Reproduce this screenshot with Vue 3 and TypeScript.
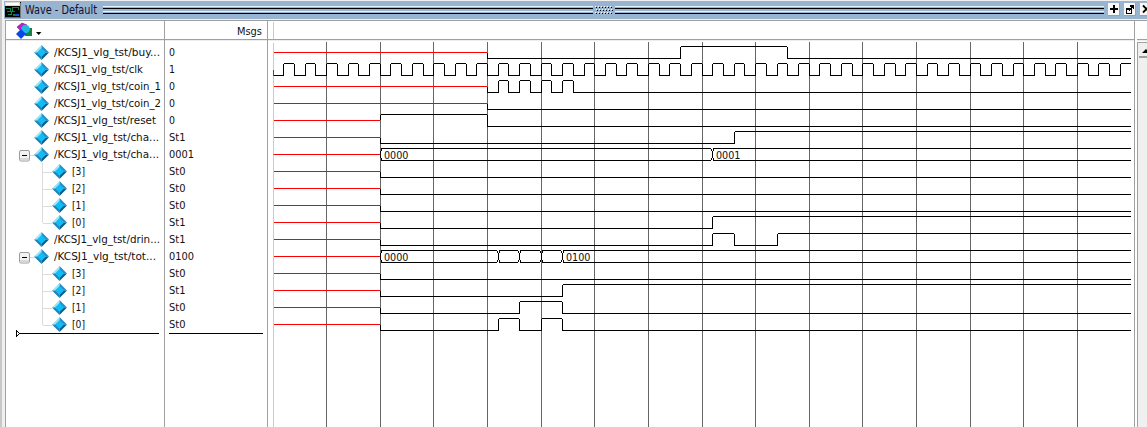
<script setup lang="ts">
interface Signal {
  name: string
  width: number
  value: string
  kind: 'bit' | 'bus'
  child?: boolean
  open?: boolean
  last?: boolean
  start: number
  level?: 0 | 1
  edges?: number[]
  labels?: { tick: number; text: string }[]
}

const bit = (name: string, width: number, value: string, start: number, level: 0 | 1, edges: number[]): Signal =>
  ({ name, width, value, kind: 'bit', start, level, edges })
const child = (name: string, value: string, edges: number[], last = false): Signal =>
  ({ name, width: 13, value, kind: 'bit', child: true, last, start: 10, level: 0, edges })

const clock = Array.from({ length: 79 }, (_, i) => i + 1)

const signals: Signal[] = [
  bit('/KCSJ1_vlg_tst/buy...', 106, '0', 20, 0, [38, 48]),
  bit('/KCSJ1_vlg_tst/clk', 89, '1', 0, 0, clock),
  bit('/KCSJ1_vlg_tst/coin_1', 107, '0', 20, 0, [21, 22, 23, 24, 25, 26, 27, 28]),
  bit('/KCSJ1_vlg_tst/coin_2', 107, '0', 20, 0, []),
  bit('/KCSJ1_vlg_tst/reset', 102, '0', 10, 1, [20]),
  bit('/KCSJ1_vlg_tst/cha...', 105, 'St1', 10, 0, [43]),
  { name: '/KCSJ1_vlg_tst/cha...', width: 105, value: '0001', kind: 'bus', open: true, start: 10, edges: [41], labels: [{ tick: 10, text: '0000' }, { tick: 41, text: '0001' }] },
  child('[3]', 'St0', []),
  child('[2]', 'St0', []),
  child('[1]', 'St0', []),
  child('[0]', 'St1', [41], true),
  bit('/KCSJ1_vlg_tst/drin...', 106, 'St1', 10, 0, [41, 43, 47]),
  { name: '/KCSJ1_vlg_tst/tot...', width: 102, value: '0100', kind: 'bus', open: true, start: 10, edges: [21, 23, 25, 27], labels: [{ tick: 10, text: '0000' }, { tick: 27, text: '0100' }] },
  child('[3]', 'St0', []),
  child('[2]', 'St1', [27]),
  child('[1]', 'St0', [23, 27]),
  child('[0]', 'St0', [21, 23, 25, 27], true),
]

// The wave canvas starts at the cursor; one tick is half a clock period.
const ORIGIN = 5
const END = 863
const tickX = (t: number): number => Math.floor(ORIGIN + t * 10.725)
const centre = (i: number): number => 12 + i * 17
const grid = Array.from({ length: 15 }, (_, i) => tickX((i + 1) * 5))

function trace(s: Signal, i: number): string {
  const c = centre(i)
  const hi = c - 6 + 0.5
  const lo = c + 6 + 0.5
  let x = tickX(s.start)
  const edges = s.edges ?? []
  if (s.kind === 'bus') {
    const stops = [x, ...edges.map(tickX)]
    let d = ''
    stops.forEach((p, n) => {
      const next = n + 1 < stops.length ? stops[n + 1] - 1 : END
      d += `M${p + 1} ${hi}H${next}M${p + 1} ${lo}H${next}`
      d += `M${p + 0.5} ${c - 3}V${c + 4}M${p + 1.5} ${c - 5}v2M${p + 1.5} ${c + 4}v2`
      if (n) d += `M${p - 0.5} ${c - 5}v2M${p - 0.5} ${c + 4}v2`
    })
    return d
  }
  let level = s.level ?? 0
  let d = ''
  if (s.start > 0) d += level ? `M${x + 0.5} ${c - 5}V${c}` : `M${x + 0.5} ${c + 1}V${c + 7}`
  for (const e of edges) {
    const nx = tickX(e)
    d += level ? `M${x + 1} ${hi}H${nx}` : `M${x} ${lo}H${nx + 1}`
    d += `M${nx + 0.5} ${c - 5}V${c + 7}`
    level = level ? 0 : 1
    x = nx
  }
  d += level ? `M${x + 1} ${hi}H${END}` : `M${x} ${lo}H${END}`
  return d
}
</script>

<template>
  <div class="window">
    <div class="edge"></div>
    <main class="dock">
      <header class="titlebar">
        <svg class="app-icon" width="16" height="16" viewBox="0 0 16 16" shape-rendering="crispEdges">
          <path d="M0 0H16V16H0z" fill="#000" />
          <path d="M0 0H15V4H0z" fill="#d8d8d8" />
          <path d="M1 1H14V3H1z" fill="#fff" />
          <path d="M0 15.5H16M15.5 1V16" stroke="#777" />
          <path d="M1 6.5H5V9.5H2M7 9.5V5.5H13V8M3 12.5H6V9.5H10M8 12.5H13" fill="none" stroke="#168348" />
          <path d="M10 12H14V14H8V13H10z" fill="#0754cc" />
        </svg>
        <svg class="title" width="78" height="18"><text x="1" y="12" textLength="72" lengthAdjust="spacingAndGlyphs">Wave - Default</text></svg>
        <div class="rails first"></div>
        <svg class="grip" width="18" height="9" shape-rendering="crispEdges">
          <g v-for="r in 3" :key="r">
            <g v-for="n in 6" :key="n">
              <rect :x="(n - 1) * 3 + (r === 2 ? 1 : 0)" :y="(r - 1) * 3" width="1" height="1" fill="#fff" />
              <rect :x="(n - 1) * 3 + 1 + (r === 2 ? 1 : 0)" :y="(r - 1) * 3 + 1" width="1" height="1" fill="#000" />
            </g>
          </g>
        </svg>
        <div class="rails second"></div>
        <div class="buttons">
          <span class="btn"><svg width="12" height="13" shape-rendering="crispEdges"><path d="M5 2H7V5H10V7H7V10H5V7H2V5H5z" /></svg></span>
          <span class="btn"><svg width="12" height="13" shape-rendering="crispEdges"><path d="M2.5 5.5H7.5V10.5H2.5zM2 6.5H8" fill="none" stroke="#000" /><path d="M6 2H10V6H9V5H8V6H7V7H6V8H5V7H6V6H7V4H6z" /></svg></span>
          <span class="btn"><svg width="12" height="13"><path d="M3 2.5L10 9.5M10 2.5L3 9.5" stroke="#000" stroke-width="1.8" /></svg></span>
        </div>
      </header>

      <div class="panes">
        <section class="pane names">
          <div class="head">
            <svg width="40" height="18">
              <path d="M10 6L15 2L20 4L14 10z" fill="#c31bc5" stroke="#6e177c" stroke-width=".6" />
              <rect x="18" y="7" width="7" height="8" fill="#148448" />
              <circle cx="18.5" cy="8" r="4.3" fill="#20b8df" />
              <path d="M14 8L19 13L14 18L9 13z" fill="#0848e8" />
              <path d="M29 11H34.4L31.7 14z" />
            </svg>
          </div>
          <div class="rows">
            <div v-for="(s, i) in signals" :key="i" class="row" :class="{ child: s.child, last: s.last, open: s.open }">
              <span class="lead">
                <svg v-if="s.open" width="11" height="12">
                  <rect x=".5" y=".5" width="10" height="10.5" rx="1.5" fill="#f2f2f2" stroke="#9b9b9b" />
                  <path d="M1 8H10V10.5H1z" fill="#d5d8dc" />
                  <path d="M3 5.5H8" stroke="#000" shape-rendering="crispEdges" />
                </svg>
              </span>
              <svg class="gem" width="15" height="15">
                <path d="M7.5 0L0 7.5H7.5z" fill="#a3e2f1" />
                <path d="M7.5 0L15 7.5H7.5z" fill="#238fcd" />
                <path d="M0 7.5H7.5V15z" fill="#1b83bd" />
                <path d="M15 7.5H7.5V15z" fill="#075b89" />
                <path d="M7.5 3L12 7.5L7.5 12L3 7.5z" fill="#10bdf5" />
              </svg>
              <svg class="label" width="110" height="16"><text x="0" y="12" :textLength="s.width" lengthAdjust="spacingAndGlyphs">{{ s.name }}</text></svg>
            </div>
          </div>
          <svg class="end" width="146" height="9" shape-rendering="crispEdges">
            <path d="M.5 1V8M1 2.5H2M2 3.5H3M3 4.5H143M2 5.5H3M1 6.5H2" stroke="#000" />
          </svg>
        </section>

        <section class="pane values">
          <div class="head"><svg width="26" height="18"><text x="0" y="14" textLength="25" lengthAdjust="spacingAndGlyphs">Msgs</text></svg></div>
          <div class="rows">
            <div v-for="(s, i) in signals" :key="i" class="row">
              <svg width="30" height="16"><text x="0" y="12" :textLength="s.value.length === 4 ? 25 : s.value.length === 3 ? 16.5 : 6" lengthAdjust="spacingAndGlyphs">{{ s.value }}</text></svg>
            </div>
          </div>
          <div class="rule"></div>
        </section>

        <section class="pane waves">
          <div class="head"><i class="cursor-top"></i></div>
          <svg class="canvas" width="866" height="387" shape-rendering="crispEdges">
            <path v-for="x in grid" :key="x" :d="`M${x + 0.5} 2V387`" stroke="#666" />
            <g v-for="(s, i) in signals" :key="i">
              <path v-if="s.start" :d="`M6 ${centre(i) + 0.5}H${tickX(s.start)}`" stroke="#f00" />
              <path :d="trace(s, i)" stroke="#000" fill="none" />
              <text v-for="l in s.labels" :key="l.tick" :x="tickX(l.tick) + 4" :y="centre(i) + 5" textLength="24.5" lengthAdjust="spacingAndGlyphs">{{ l.text }}</text>
            </g>
            <path d="M5.5 3V387" stroke="#ffd800" />
            <path d="M5.5 30V36" stroke="#0050ff" />
            <path d="M5.5 114V115" stroke="#ff40ff" />
          </svg>
        </section>

        <section class="pane scroll">
          <div class="head"></div>
          <div class="track">
            <div class="arrow"><svg width="10" height="15"><path d="M3 10L7 6L11 10z" /></svg></div>
          </div>
        </section>
      </div>
    </main>
  </div>
</template>

<style>
body { overflow: hidden; background: #f0f0f0; }
</style>

<style scoped>
.window { display: flex; width: 1147px; height: 427px; overflow: hidden; background: #f0f0f0; font: 11px "DejaVu Sans Condensed", "DejaVu Sans", sans-serif; color: #000; }
svg { display: block; flex: none; }
text { font: 11px "DejaVu Sans Condensed", "DejaVu Sans", sans-serif; fill: #111; }
.edge { width: 5px; flex: none; box-sizing: border-box; border-left: 2px solid #c8c8c8; background: #f0f0f0; }
.dock { width: 1142px; flex: none; }
.titlebar { display: flex; height: 18px; margin: 1px 0 0 -1px; background: #99b4d1; box-sizing: border-box; padding-left: 1px; }
.app-icon { margin-top: 1px; }
.title { margin: 1px 0 -1px 3px; overflow: visible; }
.title text { font-size: 12px; fill: #101030; }
.rails { height: 8px; margin-top: 5px; flex: none; background: linear-gradient(to bottom, #dff4ff 0 1px, #99b4d1 1px 2px, #000 2px 3px, #99b4d1 3px 5px, #dff4ff 5px 6px, #99b4d1 6px 7px, #000 7px 8px); }
.first { width: 490px; margin-left: 1px; }
.grip { margin: 5px 2px 0; }
.second { width: 489px; }
.buttons { display: flex; gap: 4px; margin: 2px 0 0 4px; }
.btn { flex: none; width: 12px; height: 13px; background: #f8f8f8; box-shadow: inset -1px -1px #a0a0a0; }
.panes { display: grid; grid-template-columns: 159px 103px 867px 13px; height: 407px; margin-top: 1px; }
.pane { box-sizing: border-box; height: 407px; min-width: 0; overflow: hidden; background: #fff; border-top: 1px solid #a0a0a0; border-left: 1px solid #a0a0a0; }
.head { display: flex; height: 19px; box-sizing: border-box; border-bottom: 1px solid #a0a0a0; box-shadow: 0 1px #ededed; }
.names .head { padding-left: 1px; }
.names .rows, .values .rows { padding-top: 4px; }
.row { height: 17px; display: flex; align-items: flex-start; position: relative; }
.lead { width: 28px; flex: none; padding: 4px 0 0 13px; box-sizing: border-box; }
.gem { margin-top: 1px; position: relative; }
.label { margin-left: 5px; }
.child .lead { width: 46px; }
.child::before { content: ""; position: absolute; left: 36px; top: 0; height: 17px; width: 9px; border-left: 1px solid #dcdcdc; }
.child.last::before { height: 9px; }
.child::after { content: ""; position: absolute; left: 37px; top: 9px; width: 9px; height: 1px; background: #dcdcdc; }
.open::before { content: ""; position: absolute; left: 24px; top: 9px; width: 5px; height: 1px; background: #dcdcdc; }
.end { margin: -4px 0 0 10px; }
.values .head { justify-content: flex-end; padding-right: 4px; }
.values .row { padding-left: 4px; }
.rule { height: 1px; width: 94px; margin: 0 0 0 4px; background: #000; }
.cursor-top { width: 1px; height: 17px; margin: 1px 0 0 5px; background: #ffd800; }
.scroll { padding-left: 2px; }
.track { height: 385px; margin-top: 2px; background: #f0f0f0; border-left: 1px solid #a0a0a0; border-top: 1px solid #a0a0a0; }
.arrow { height: 15px; margin-left: 1px; background: #f0f0f0; border-bottom: 2px solid #a0a094; box-sizing: border-box; overflow: hidden; }
</style>
